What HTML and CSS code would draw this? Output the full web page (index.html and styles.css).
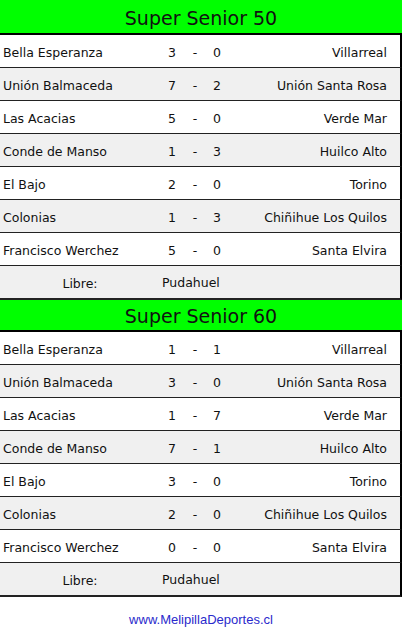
FILE: index.html
```html
<!DOCTYPE html>
<html lang="es">
<head>
<meta charset="utf-8">
<title>Super Senior</title>
<link rel="stylesheet" href="styles.css">
</head>
<body>
<div class="sheet">
  <section class="block">
    <h2 class="title title--first">Super Senior 50</h2>
    <div class="row"><span class="home">Bella Esperanza</span><span class="g">3</span><span class="d">-</span><span class="g">0</span><span class="away">Villarreal</span></div>
    <div class="row alt"><span class="home">Unión Balmaceda</span><span class="g">7</span><span class="d">-</span><span class="g">2</span><span class="away">Unión Santa Rosa</span></div>
    <div class="row"><span class="home">Las Acacias</span><span class="g">5</span><span class="d">-</span><span class="g">0</span><span class="away">Verde Mar</span></div>
    <div class="row alt"><span class="home">Conde de Manso</span><span class="g">1</span><span class="d">-</span><span class="g">3</span><span class="away">Huilco Alto</span></div>
    <div class="row"><span class="home">El Bajo</span><span class="g">2</span><span class="d">-</span><span class="g">0</span><span class="away">Torino</span></div>
    <div class="row alt"><span class="home">Colonias</span><span class="g">1</span><span class="d">-</span><span class="g">3</span><span class="away">Chiñihue Los Quilos</span></div>
    <div class="row"><span class="home">Francisco Werchez</span><span class="g">5</span><span class="d">-</span><span class="g">0</span><span class="away">Santa Elvira</span></div>
    <div class="row alt last"><span class="libre">Libre:</span><span class="free">Pudahuel</span></div>
  </section>
  <section class="block">
    <h2 class="title">Super Senior 60</h2>
    <div class="row"><span class="home">Bella Esperanza</span><span class="g">1</span><span class="d">-</span><span class="g">1</span><span class="away">Villarreal</span></div>
    <div class="row alt"><span class="home">Unión Balmaceda</span><span class="g">3</span><span class="d">-</span><span class="g">0</span><span class="away">Unión Santa Rosa</span></div>
    <div class="row"><span class="home">Las Acacias</span><span class="g">1</span><span class="d">-</span><span class="g">7</span><span class="away">Verde Mar</span></div>
    <div class="row alt"><span class="home">Conde de Manso</span><span class="g">7</span><span class="d">-</span><span class="g">1</span><span class="away">Huilco Alto</span></div>
    <div class="row"><span class="home">El Bajo</span><span class="g">3</span><span class="d">-</span><span class="g">0</span><span class="away">Torino</span></div>
    <div class="row alt"><span class="home">Colonias</span><span class="g">2</span><span class="d">-</span><span class="g">0</span><span class="away">Chiñihue Los Quilos</span></div>
    <div class="row"><span class="home">Francisco Werchez</span><span class="g">0</span><span class="d">-</span><span class="g">0</span><span class="away">Santa Elvira</span></div>
    <div class="row alt last"><span class="libre">Libre:</span><span class="free">Pudahuel</span></div>
  </section>
  <p class="footer"><a class="site" href="#">www.MelipillaDeportes.cl</a></p>
</div>
</body>
</html>
```

FILE: styles.css
```css
* { box-sizing: border-box; }
html, body { margin: 0; padding: 0; background: #fff; }
.sheet {
  width: 402px;
  font-family: "DejaVu Sans", Verdana, sans-serif;
  font-size: 12.5px;
  color: #111;
}
.block { display: flex; flex-direction: column; }
.title {
  margin: 0;
  height: 32px;
  padding-top: 2px;
  background: #00ff00;
  border-bottom: 2px solid #000;
  font-weight: normal;
  font-size: 19px;
  line-height: 28px;
  text-align: center;
  color: #111;
}
.title--first {
  height: 35px;
  padding-top: 4px;
  line-height: 29px;
}
.row {
  display: grid;
  grid-template-columns: 160px 24px 22px 22px 1fr;
  height: 33px;
  padding-top: 2px;
  align-items: center;
  background: #fff;
  border-bottom: 1px solid #222;
  border-right: 2px solid #000;
}
.row.alt { background: #f0f0f0; }
.row.last { height: 34px; border-bottom-width: 2px; padding-top: 0; }
.home { padding-left: 3px; white-space: nowrap; }
.g, .d { text-align: center; }
.away { text-align: right; padding-right: 13px; white-space: nowrap; }
.libre { text-align: center; padding-top: 2px; }
.free { grid-column: 2 / 6; padding-left: 2px; }
.footer { margin: 15px 0 0; text-align: center; line-height: 16px; }
.site {
  font-family: "Liberation Sans", Arial, sans-serif;
  font-size: 13px;
  color: #2a2acc;
  text-decoration: none;
}
```
